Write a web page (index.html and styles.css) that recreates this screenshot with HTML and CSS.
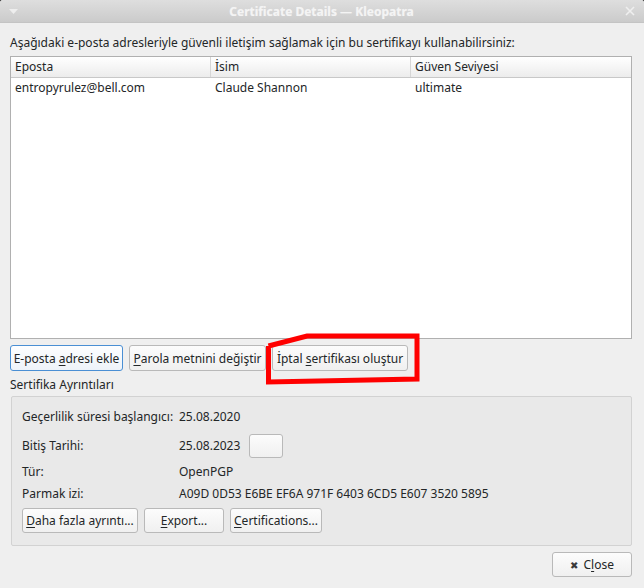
FILE: index.html
```html
<!DOCTYPE html>
<html lang="tr">
<head>
<meta charset="utf-8">
<title>Certificate Details — Kleopatra</title>
<link rel="stylesheet" href="styles.css">
</head>
<body>
<div class="window">
  <div class="titlebar">
    <svg class="tb-menu" width="9" height="6" viewBox="0 0 9 6"><path d="M0 0 H9 L4.5 5 Z" fill="#eeeeee"/></svg>
    <span class="tb-title">Certificate Details — Kleopatra</span>
    <svg class="tb-close" width="10" height="10" viewBox="0 0 10 10"><path d="M1 1 L9 9 M9 1 L1 9" stroke="#efefef" stroke-width="1.6"/></svg>
  </div>
  <div class="content">
    <p class="intro">Aşağıdaki e-posta adresleriyle güvenli iletişim sağlamak için bu sertifikayı kullanabilirsiniz:</p>
    <div class="table">
      <div class="thead">
        <div class="th">Eposta</div>
        <div class="th">İsim</div>
        <div class="th last">Güven Seviyesi</div>
      </div>
      <div class="tr">
        <div class="td">entropyrulez@bell.com</div>
        <div class="td">Claude Shannon</div>
        <div class="td">ultimate</div>
      </div>
    </div>
    <div class="btnrow">
      <button class="btn focus w112"><span>E-posta <u>a</u>dresi ekle</span></button>
      <button class="btn w136"><span><u>P</u>arola metnini değiştir</span></button>
      <button class="btn w135"><span>İptal <u>s</u>ertifikası oluştur</span></button>
    </div>
    <div class="section-label">Sertifika Ayrıntıları</div>
    <div class="group">
      <div class="details">
        <div class="lbl">Geçerlilik süresi başlangıcı:</div>
        <div class="val">25.08.2020</div>
        <div class="lbl">Bitiş Tarihi:</div>
        <div class="val"><span>25.08.2023</span><button class="btn small"></button></div>
        <div class="lbl">Tür:</div>
        <div class="val">OpenPGP</div>
        <div class="lbl">Parmak izi:</div>
        <div class="val">A09D 0D53 E6BE EF6A 971F 6403 6CD5 E607 3520 5895</div>
      </div>
      <div class="gbtns">
        <button class="btn w115"><span><u>D</u>aha fazla ayrıntı...</span></button>
        <button class="btn w79"><span><u>E</u>xport...</span></button>
        <button class="btn w91"><span><u>C</u>ertifications...</span></button>
      </div>
    </div>
    <div class="footer">
      <button class="btn close"><span class="x">✖</span><span>C<u>l</u>ose</span></button>
    </div>
  </div>
  <svg class="annot" width="160" height="56" viewBox="0 0 160 56">
    <path d="M3.5 13 L3.5 49 L152 46 L152 3 L42 3 L3.5 13" fill="none" stroke="#ff0000" stroke-width="5" stroke-linejoin="miter"/>
  </svg>
</div>
</body>
</html>
```

FILE: styles.css
```css
* { box-sizing: border-box; }
html, body {
  margin: 0;
  padding: 0;
  background: #2b2b2b;
}
body {
  width: 644px;
  height: 588px;
  overflow: hidden;
  font-family: "Noto Sans", "DejaVu Sans", sans-serif;
  font-size: 12px;
  color: #232627;
}
.window {
  position: relative;
  width: 644px;
  height: 588px;
  background: #efefef;
  border-radius: 3px 3px 0 0;
  overflow: hidden;
}
.titlebar {
  height: 23px;
  background: linear-gradient(#dedede, #cbcbcb);
  display: flex;
  align-items: center;
  justify-content: space-between;
  padding: 0 9px 0 9px;
  border-bottom: 1px solid #c4c4c4;
}
.tb-title {
  font-weight: bold;
  color: #f4f4f4;
  font-size: 12px;
  text-shadow: 0 0 1px rgba(255,255,255,0.4);
}
.tb-menu { margin-top: 1px; }
.content {
  padding: 11px 12px 0 10px;
}
.intro {
  margin: 0;
  line-height: 17px;
  height: 22px;
}
.table {
  height: 283px;
  background: #ffffff;
  border: 1px solid #b0b0b0;
}
.thead {
  display: grid;
  grid-template-columns: 200px 200px 1fr;
  height: 21px;
  background: linear-gradient(#ffffff, #ececec);
  border-bottom: 1px solid #c8c8c8;
}
.th {
  padding: 0 4px;
  line-height: 20px;
  border-right: 1px solid #d6d6d6;
}
.th.last { border-right: none; }
.tr {
  display: grid;
  grid-template-columns: 200px 200px 1fr;
  height: 20px;
}
.td {
  padding: 0 4px;
  line-height: 20px;
}
.btnrow {
  display: flex;
  gap: 6px;
  margin-top: 6px;
  height: 26px;
}
.btn {
  font-family: inherit;
  font-size: 12px;
  color: #232627;
  height: 26px;
  padding: 0 4px;
  background: linear-gradient(#fcfcfc, #f0f0f0);
  border: 1px solid #b9b9b9;
  border-radius: 3px;
  white-space: nowrap;
  display: inline-flex;
  align-items: center;
  justify-content: center;
}
.btn u { text-underline-offset: 2px; }
.btn.focus {
  border-color: #4a8fd4;
  background: linear-gradient(#fdfeff, #eef3f9);
}
.w112 { width: 113px; }
.w136 { width: 137px; }
.w135 { width: 136px; }
.w115 { width: 116px; }
.w79 { width: 80px; }
.w91 { width: 92px; }
.section-label {
  margin-top: 4px;
  line-height: 20px;
  height: 21px;
}
.group {
  margin-left: 1px;
  width: 621px;
  height: 150px;
  background: #e9e9e9;
  border: 1px solid #d2d2d2;
  border-radius: 2px;
  padding: 6px 10px 0 10px;
}
.details {
  display: grid;
  grid-template-columns: 157px 1fr;
  grid-template-rows: 27px 31px 20px 24px;
  align-items: center;
}
.val {
  display: flex;
  align-items: center;
  gap: 9px;
}
.btn.small {
  width: 34px;
  height: 24px;
}
.gbtns {
  display: flex;
  gap: 6px;
  margin-top: 3px;
}
.gbtns .btn { height: 25px; }
.footer {
  display: flex;
  justify-content: flex-end;
  margin-top: 6px;
}
.btn.close {
  width: 80px;
  height: 25px;
  gap: 5px;
}
.btn.close .x {
  font-size: 10px;
  color: #3a3a3a;
}
.annot {
  position: absolute;
  left: 265px;
  top: 333px;
}
```
